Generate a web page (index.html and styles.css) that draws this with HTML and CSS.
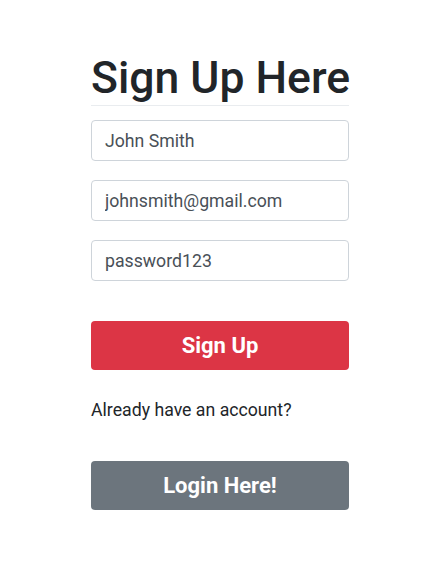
FILE: index.html
```html
<!DOCTYPE html>
<html>
<head>
<meta charset="utf-8">
<link rel="stylesheet" href="styles.css">
</head>
<body>
<div class="wrap">
  <form class="form">
    <h1 class="title">Sign Up Here</h1>
    <div class="fields">
      <input class="field" type="text" value="John Smith">
      <input class="field" type="text" value="johnsmith@gmail.com">
      <input class="field" type="text" value="password123">
    </div>
    <button type="button" class="btn btn-red">Sign Up</button>
    <p class="note">Already have an account?</p>
    <button type="button" class="btn btn-gray">Login Here!</button>
  </form>
</div>
</body>
</html>
```
FILE: styles.css
```css
* { box-sizing: border-box; }
body {
  margin: 0;
  background: #fff;
  font-family: Roboto, "Liberation Sans", sans-serif;
  color: #212529;
}
.wrap {
  display: flex;
  justify-content: center;
  padding-top: 53px;
  padding-right: 1px;
}
.form {
  width: 258px;
  display: flex;
  flex-direction: column;
}
.title {
  margin: 0;
  font-size: 44.5px;
  font-weight: 500;
  line-height: 50px;
  padding-bottom: 2px;
  border-bottom: 1px solid #e9ecef;
  white-space: nowrap;
}
.fields {
  display: flex;
  flex-direction: column;
  gap: 19px;
  margin-top: 14px;
}
.field {
  height: 41px;
  border: 1px solid #ced4da;
  border-radius: 4px;
  padding: 0 13px;
  font-family: Roboto, "Liberation Sans", sans-serif;
  font-size: 17.7px;
  color: #495057;
  background: #fff;
}
.btn {
  height: 49px;
  border: none;
  border-radius: 4px;
  color: #fff;
  font-family: Roboto, "Liberation Sans", sans-serif;
  font-size: 22px;
  font-weight: 700;
}
.btn-red { background: #dc3545; margin-top: 40px; }
.btn-gray { background: #6c757d; }
.note {
  margin: 30px 0 41px;
  font-size: 17.7px;
  line-height: 20px;
}
```
